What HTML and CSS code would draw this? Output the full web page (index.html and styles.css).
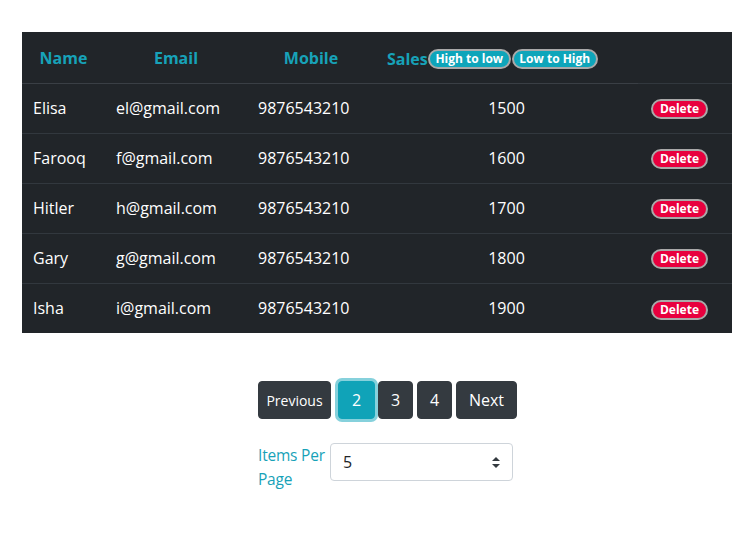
FILE: index.html
```
<!DOCTYPE html>
<html>
<head>
<meta charset="utf-8">
<link rel="stylesheet" href="styles.css">
</head>
<body>
<div class="page">
  <table class="users">
    <thead>
      <tr>
        <th class="c-name">Name</th>
        <th class="c-email">Email</th>
        <th class="c-mobile">Mobile</th>
        <th class="c-sales"><span class="sales-label">Sales</span><button class="pill pill-info">High to low</button><button class="pill pill-info">Low to High</button></th>
      </tr>
    </thead>
    <tbody>
      <tr><td>Elisa</td><td>el@gmail.com</td><td>9876543210</td><td class="num">1500</td><td><button class="pill pill-danger">Delete</button></td></tr>
      <tr><td>Farooq</td><td>f@gmail.com</td><td>9876543210</td><td class="num">1600</td><td><button class="pill pill-danger">Delete</button></td></tr>
      <tr><td>Hitler</td><td>h@gmail.com</td><td>9876543210</td><td class="num">1700</td><td><button class="pill pill-danger">Delete</button></td></tr>
      <tr><td>Gary</td><td>g@gmail.com</td><td>9876543210</td><td class="num">1800</td><td><button class="pill pill-danger">Delete</button></td></tr>
      <tr><td>Isha</td><td>i@gmail.com</td><td>9876543210</td><td class="num">1900</td><td><button class="pill pill-danger">Delete</button></td></tr>
    </tbody>
  </table>

  <div class="controls">
    <div class="pager">
      <button class="pg pg-text">Previous</button>
      <button class="pg pg-active">2</button>
      <button class="pg">3</button>
      <button class="pg">4</button>
      <button class="pg pg-next">Next</button>
    </div>
    <div class="per-page">
      <label class="per-label">Items Per Page</label>
      <div class="select">
        <span>5</span>
        <svg class="caret" width="8" height="11" viewBox="0 0 8 11"><path d="M4 0 L8 4 L0 4 Z M0 7 L8 7 L4 11 Z" fill="#343a40"/></svg>
      </div>
    </div>
  </div>
</div>
</body>
</html>
```
FILE: styles.css
```
* { box-sizing: border-box; }
body {
  margin: 0;
  background: #fff;
  font-family: "Open Sans", "Noto Sans", sans-serif;
  font-size: 16px;
  color: #212529;
}
.page {
  padding: 32px 24px 0 22px;
}
.users {
  width: 710px;
  border-collapse: collapse;
  background: #212529;
  color: #fff;
  table-layout: fixed;
}
.users th {
  height: 51px;
  color: #17a2b8;
  font-weight: 700;
  font-size: 16px;
  text-align: center;
  border-bottom: 1px solid #3a3f45;
  padding: 2px 0 0;
}
.c-name { width: 83px; }
.c-email { width: 142px; }
.c-mobile { width: 128px; }
.c-sales { width: 263px; }
.users th.c-sales {
  text-align: left;
  padding-left: 12px;
  white-space: nowrap;
}
.sales-label { vertical-align: middle; }
.users td {
  height: 50px;
  padding: 0 11px;
  border-top: 1px solid #32383e;
  font-size: 16px;
  white-space: nowrap;
}
.users td.num { text-align: center; }
.pill {
  font-family: inherit;
  font-weight: 700;
  font-size: 12px;
  color: #fff;
  border: 2px solid #a9a9a9;
  border-radius: 10px;
  height: 20px;
  padding: 0;
  line-height: 16px;
  vertical-align: middle;
  text-align: center;
}
.pill-info { background: #0ea5ba; width: 83px; }
.pill-info + .pill-info { margin-left: 1px; width: 86px; }
.pill-danger { background: #e8003e; width: 57px; margin-left: 2px; }

.controls {
  margin-left: 236px;
  margin-top: 48px;
  width: 260px;
}
.pager {
  display: flex;
  gap: 3px;
}
.pg {
  font-family: inherit;
  height: 38px;
  width: 35px;
  background: #343a40;
  color: #fff;
  border: 1px solid #343a40;
  border-radius: 4px;
  font-size: 16px;
  padding: 0;
  text-align: center;
}
.pg-text { font-size: 14px; width: 73px; margin-right: 4px; }
.pg-active {
  width: 37px;
  background: #10a3b8;
  border-color: #10a3b8;
  box-shadow: 0 0 0 3px #86d1dc;
}
.pg + .pg:nth-child(4) { margin-left: 1px; }
.pg-next { width: 61px; margin-left: 1px; }
.per-page {
  display: flex;
  margin-top: 24px;
}
.per-label {
  width: 72px;
  color: #17a2b8;
  font-size: 15.5px;
  line-height: 24px;
  letter-spacing: -0.2px;
}
.select {
  width: 183px;
  height: 38px;
  border: 1px solid #ced4da;
  border-radius: 4px;
  display: flex;
  align-items: center;
  justify-content: space-between;
  padding: 0 12px;
  color: #212529;
}
```
